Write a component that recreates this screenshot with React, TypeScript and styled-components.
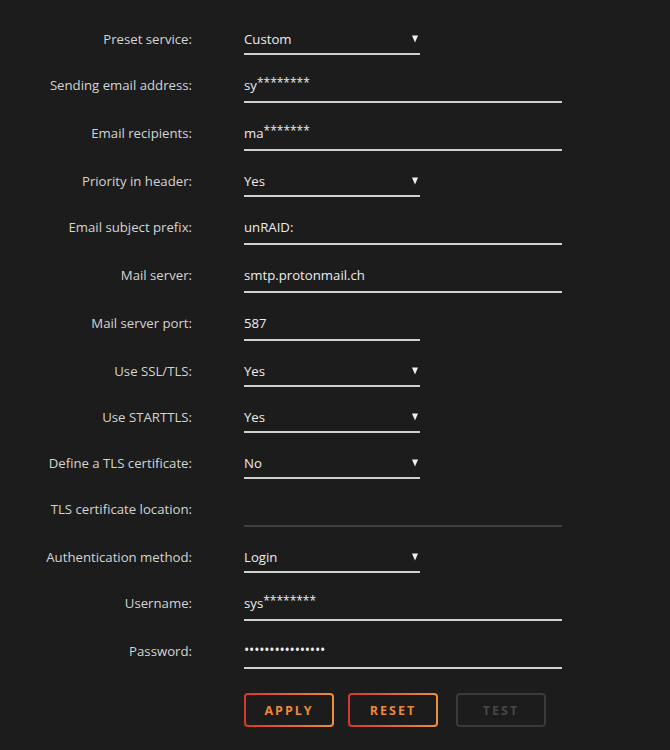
import React from 'react';
import styled, { createGlobalStyle } from 'styled-components';

const GlobalStyle = createGlobalStyle`
  html, body {
    margin: 0;
    padding: 0;
    background: #1c1c1c;
  }
  body {
    font-family: "Open Sans", "Liberation Sans", sans-serif;
    font-size: 13px;
    color: #e2e2e2;
  }
`;

const Page = styled.div`
  width: 670px;
  min-height: 750px;
  box-sizing: border-box;
  padding-top: 9px;
  background: #1c1c1c;
`;

const Row = styled.div<{ $lift: number }>`
  display: grid;
  grid-template-columns: 192px 1fr;
  column-gap: 52px;
  align-items: center;
  padding-top: 16px;

  & > label {
    padding-bottom: ${p => p.$lift + 2}px;
  }
`;

const Label = styled.label`
  text-align: right;
  color: #d4d4d4;
  font-size: 13.2px;
  white-space: nowrap;
`;

const Field = styled.div<{ $kind: 'select' | 'text'; $short?: boolean; $disabled?: boolean }>`
  position: relative;
  box-sizing: border-box;
  width: ${p => (p.$kind === 'select' || p.$short ? '176px' : '318px')};
  height: ${p => (p.$kind === 'select' ? '30px' : '32px')};
  padding-bottom: ${p => (p.$kind === 'select' ? '1px' : '3px')};
  display: flex;
  align-items: center;
  border-bottom: 2px solid ${p => (p.$disabled ? '#3e3e3e' : '#d0d0d0')};
  color: #ececec;
  font-size: 13.2px;
`;

const Arrow = styled.span`
  position: absolute;
  right: 2px;
  top: 50%;
  transform: translateY(-50%);
  width: 0;
  height: 0;
  border-left: 3.5px solid transparent;
  border-right: 3.5px solid transparent;
  border-top: 7px solid #f0f0f0;
`;

const Masked = styled.span`
  font-size: 12px;
  position: relative;
  top: -2px;
`;

const Dots = styled.span`
  font-size: 14px;
  letter-spacing: -0.2px;
  position: relative;
  top: -1px;
`;

const Buttons = styled.div`
  display: flex;
  padding: 24px 0 0 244px;
  gap: 14px;
`;

const Button = styled.button<{ $disabled?: boolean; $gap?: number }>`
  box-sizing: border-box;
  width: 90px;
  height: 34px;
  margin-left: ${p => p.$gap ?? 0}px;
  border: 2px solid transparent;
  border-radius: 4px;
  font-family: "Open Sans", "Liberation Sans", sans-serif;
  font-size: 12.5px;
  font-weight: 700;
  letter-spacing: 2px;
  text-transform: uppercase;
  padding: 0;
  cursor: ${p => (p.$disabled ? 'default' : 'pointer')};
  color: ${p => (p.$disabled ? '#474747' : '#ea8a3a')};
  background: ${p =>
    p.$disabled
      ? '#1c1c1c'
      : 'linear-gradient(#1c1c1c, #1c1c1c) padding-box, linear-gradient(90deg, #d9362b, #ec8f3c) border-box'};
  border-color: ${p => (p.$disabled ? '#3a3a3a' : 'transparent')};
`;

type Item =
  | { label: string; kind: 'select'; value: string }
  | {
      label: string;
      kind: 'text';
      value: string;
      mask?: string;
      short?: boolean;
      disabled?: boolean;
      password?: boolean;
    };

const items: Item[] = [
  { label: 'Preset service:', kind: 'select', value: 'Custom' },
  { label: 'Sending email address:', kind: 'text', value: 'sy', mask: '********' },
  { label: 'Email recipients:', kind: 'text', value: 'ma', mask: '*******' },
  { label: 'Priority in header:', kind: 'select', value: 'Yes' },
  { label: 'Email subject prefix:', kind: 'text', value: 'unRAID:' },
  { label: 'Mail server:', kind: 'text', value: 'smtp.protonmail.ch' },
  { label: 'Mail server port:', kind: 'text', value: '587', short: true },
  { label: 'Use SSL/TLS:', kind: 'select', value: 'Yes' },
  { label: 'Use STARTTLS:', kind: 'select', value: 'Yes' },
  { label: 'Define a TLS certificate:', kind: 'select', value: 'No' },
  { label: 'TLS certificate location:', kind: 'text', value: '', disabled: true },
  { label: 'Authentication method:', kind: 'select', value: 'Login' },
  { label: 'Username:', kind: 'text', value: 'sys', mask: '********' },
  { label: 'Password:', kind: 'text', value: '', password: true },
];

export default function App() {
  return (
    <Page>
      <GlobalStyle />
      {items.map(item => (
        <Row key={item.label} $lift={item.kind === 'select' ? 1 : 3}>
          <Label>{item.label}</Label>
          {item.kind === 'select' ? (
            <Field $kind="select">
              {item.value}
              <Arrow />
            </Field>
          ) : (
            <Field $kind="text" $short={item.short} $disabled={item.disabled}>
              {item.value}
              {item.mask && <Masked>{item.mask}</Masked>}
              {item.password && <Dots>{'\u2022'.repeat(16)}</Dots>}
            </Field>
          )}
        </Row>
      ))}
      <Buttons>
        <Button>Apply</Button>
        <Button>Reset</Button>
        <Button $disabled $gap={4}>Test</Button>
      </Buttons>
    </Page>
  );
}
